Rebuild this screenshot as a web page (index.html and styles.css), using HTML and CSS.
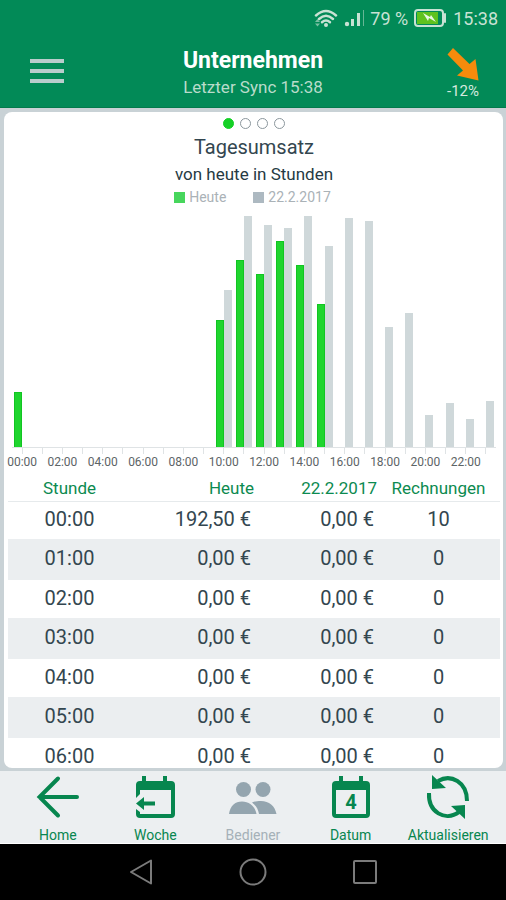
FILE: index.html
```html
<!DOCTYPE html>
<html lang="de">
<head>
<meta charset="utf-8">
<meta name="viewport" content="width=device-width, initial-scale=1">
<title>Unternehmen – Tagesumsatz</title>
<link rel="stylesheet" href="styles.css">
</head>
<body>
<div class="app">
  <div class="top">
    <div class="status">
      <svg class="wifi" viewBox="0 0 24 19" aria-hidden="true">
        <g fill="none" stroke="currentColor" stroke-width="2.500" stroke-linecap="round">
          <path d="M2 6.500Q12 -2.500 22 6.500"/><path d="M5 10Q12 3.500 19 10"/><path d="M8 13.200Q12 9.800 16 13.200"/>
        </g>
        <circle cx="12" cy="16" r="2" fill="currentColor"/>
        <path d="M1 13l2.500-3 2.500 3zM1 14.500h5l-2.500 3z" fill="currentColor" opacity=".6"/>
      </svg>
      <svg class="signal" viewBox="0 0 22 18" aria-hidden="true">
        <g fill="currentColor"><circle cx="3" cy="15" r="2.200"/><rect x="7" y="10" width="3" height="7"/><rect x="13" y="4" width="3" height="13"/><rect x="19" y="1" width="1" height="16" opacity=".5"/></g>
      </svg>
      <span>79 %</span>
      <svg class="battery" viewBox="0 0 33 18" aria-hidden="true">
        <rect x="1" y="1" width="28" height="16" rx="3" fill="none" stroke="#c9e2d4" stroke-width="2"/>
        <rect x="30" y="4" width="2" height="10" rx="1" fill="#c9e2d4"/>
        <rect x="3" y="3" width="21" height="12" fill="#5fc21f"/>
        <path d="M9 4l7 4 1-2 5 7-7-4-1 3z" fill="#e9f7e4"/>
      </svg>
      <span>15:38</span>
    </div>
    <header class="header">
      <button class="menu" type="button" aria-label="Menü"><span></span><span></span><span></span></button>
      <div class="title">
        <h1>Unternehmen</h1>
        <p>Letzter Sync 15:38</p>
      </div>
      <div class="trend">
        <svg viewBox="0 0 34 34" aria-hidden="true"><path d="M7 0L23.500 16 29.500 11 32.500 32.500 11 27.500 17 22.500 1.500 6.500z" fill="#f68b0c"/></svg>
        <span>-12%</span>
      </div>
    </header>
  </div>

  <main class="main">
    <section class="card">
      <div class="dots"><i class="dot active"></i><i class="dot"></i><i class="dot"></i><i class="dot"></i></div>
      <h2>Tagesumsatz</h2>
      <p class="sub">von heute in Stunden</p>
      <div class="legend"><span class="key today">Heute</span><span class="key past">22.2.2017</span></div>
      <div class="chart" id="chart"></div>
      <table>
        <thead><tr><th scope="col">Stunde</th><th scope="col">Heute</th><th scope="col">22.2.2017</th><th scope="col">Rechnungen</th></tr></thead>
        <tbody>
          <tr><td>00:00</td><td>192,50 €</td><td>0,00 €</td><td>10</td></tr>
          <tr><td>01:00</td><td>0,00 €</td><td>0,00 €</td><td>0</td></tr>
          <tr><td>02:00</td><td>0,00 €</td><td>0,00 €</td><td>0</td></tr>
          <tr><td>03:00</td><td>0,00 €</td><td>0,00 €</td><td>0</td></tr>
          <tr><td>04:00</td><td>0,00 €</td><td>0,00 €</td><td>0</td></tr>
          <tr><td>05:00</td><td>0,00 €</td><td>0,00 €</td><td>0</td></tr>
          <tr><td>06:00</td><td>0,00 €</td><td>0,00 €</td><td>0</td></tr>
        </tbody>
      </table>
    </section>
  </main>

  <nav class="tabs">
    <button type="button">
      <svg viewBox="0 0 44 44" aria-hidden="true"><path d="M22 3.500L3.500 22 22 40.500M3.500 22H41" fill="none" stroke="currentColor" stroke-width="4" stroke-linecap="round"/></svg>
      <span>Home</span>
    </button>
    <button type="button">
      <svg viewBox="0 0 44 44" aria-hidden="true">
        <path d="M9 1h4v5h17V1h4v5h4a4 4 0 0 1 4 4v29a4 4 0 0 1-4 4H7a4 4 0 0 1-4-4v-5l4 3v2h31V15H7v4l-4 4V10a4 4 0 0 1 4-4h2z" fill="currentColor"/>
        <path d="M3 28.500l8-6.500v4.500h11v4H11V35z" fill="currentColor"/>
      </svg>
      <span>Woche</span>
    </button>
    <button type="button" disabled>
      <svg class="wide" viewBox="0 0 50 44" aria-hidden="true">
        <g fill="#94a5af"><circle cx="15.500" cy="14.500" r="7.500"/><circle cx="35" cy="14.500" r="7.500"/>
        <path d="M1 39c1-8 6-12.500 13-12.500S27 31 28.500 39z"/><path d="M24 27.500c2.500-1 5-1.500 9-1.500 8 0 14 5 15.500 13H31c-.8-5-3-8.500-7-11.500z"/></g>
      </svg>
      <span>Bediener</span>
    </button>
    <button type="button">
      <svg viewBox="0 0 44 44" aria-hidden="true">
        <path d="M10 1h4v5h16V1h4v5h3a4 4 0 0 1 4 4v29a4 4 0 0 1-4 4H7a4 4 0 0 1-4-4V10a4 4 0 0 1 4-4h3zM7 15v24h30V15z" fill="currentColor" fill-rule="evenodd"/>
        <text x="22" y="34" text-anchor="middle">4</text>
      </svg>
      <span>Datum</span>
    </button>
    <button type="button">
      <svg viewBox="0 0 44 44" aria-hidden="true">
        <g fill="none" stroke="currentColor" stroke-width="4"><path d="M12 6C25-1.500 41 7 41 26"/><path d="M3 18C2 37 19 47 33 37"/></g>
        <path d="M6 0v14l14-1zM39 44V30l-14 1z" fill="currentColor"/>
      </svg>
      <span>Aktualisieren</span>
    </button>
  </nav>

  <div class="system">
    <button type="button" aria-label="Zurück"><svg viewBox="0 0 28 28" aria-hidden="true"><path d="M4 14L24 2.500v23z"/></svg></button>
    <button type="button" aria-label="Startbildschirm"><svg viewBox="0 0 28 28" aria-hidden="true"><circle cx="14" cy="14" r="12.500"/></svg></button>
    <button type="button" aria-label="Übersicht"><svg viewBox="0 0 28 28" aria-hidden="true"><rect x="3" y="3" width="22" height="22" rx="1"/></svg></button>
  </div>
</div>
<script src="chart.js"></script>
</body>
</html>
```
FILE: styles.css
```css
* { box-sizing: border-box; }
body { margin: 0; font-family: Roboto, "Liberation Sans", sans-serif; color: #33464f; }
h1, h2, p { margin: 0; }
button { border: 0; padding: 0; background: none; font: inherit; color: inherit; }

.app { display: flex; flex-direction: column; height: 100vh; background: #c9d2d6; }

.top { background: #028a57; border-bottom: 1px solid #027a4b; color: #fff; }
.status { display: flex; align-items: center; justify-content: flex-end; height: 36px; padding-right: 8px; font-size: 18px; color: #c9e2d4; }
.status svg { flex: none; }
.wifi { width: 24px; height: 19px; margin-right: 6px; }
.signal { width: 22px; height: 18px; margin-right: 4px; }
.battery { width: 33px; height: 18px; margin: 0 6px; }

.header { display: grid; grid-template-columns: 90px 1fr 90px; align-items: start; height: 71px; }
.menu { display: flex; flex-direction: column; gap: 6px; margin: 23px 0 0 30px; width: 34px; }
.menu span { height: 4px; background: #b9cdcc; }
.title { text-align: center; padding-top: 11px; }
.title h1 { font-size: 23px; line-height: 28px; font-weight: 700; }
.title p { font-size: 17px; line-height: 24px; color: #b9dccb; }
.trend { display: flex; flex-direction: column; align-items: center; padding: 12px 0 0 4px; font-size: 15px; line-height: 18px; color: #d5e9df; }
.trend svg { width: 34px; height: 34px; }

.main { flex: 1; min-height: 0; padding: 4px 3px 3px 4px; }
.card { height: 100%; overflow: hidden; background: #fff; border-radius: 8px; padding: 0 3px 0 4px; }
.dots { display: flex; justify-content: center; gap: 6px; padding-top: 6px; }
.dot { width: 11px; height: 11px; border: 1px solid #8b969c; border-radius: 50%; }
.dot.active { background: #15d026; border-color: #15d026; }
.card h2 { text-align: center; font-weight: 400; font-size: 20px; line-height: 28px; padding-top: 4px; }
.sub { text-align: center; font-size: 17px; line-height: 26px; color: #263a43; }
.legend { display: flex; justify-content: center; gap: 27px; padding-right: 3px; font-size: 14px; line-height: 20px; color: #aab2b7; }
.key { display: flex; align-items: center; gap: 4px; }
.key::before { content: ""; width: 11px; height: 11px; }
.today::before { background: #47d65c; }
.past::before { background: #adb9c1; }

.chart { display: grid; grid-template-columns: repeat(24, 1fr); padding: 9px 4px 0; }
.bars { display: flex; justify-content: center; align-items: flex-end; height: 232px; border-bottom: 1px solid #dfe3e5; }
.bar { width: 8px; }
.bar.now { background: #1fd52e; border: solid #11c522; border-width: 1px 1px 0; }
.bar.then { background: #cfd8da; }
.hour { display: flex; flex-direction: column; min-width: 0; }
.mark { align-self: center; width: 1px; height: 6px; background: #dfe3e5; margin-bottom: 1px; }
.tick { display: flex; justify-content: center; font-size: 12px; line-height: 14px; color: #5d6466; white-space: nowrap; }

table { width: 100%; table-layout: fixed; border-collapse: collapse; font-size: 20px; }
th { height: 32px; padding: 7px 0 0; font-size: 17px; font-weight: 400; color: #0c8a50; border-bottom: 1px solid #e6eaec; }
td { height: 38px; padding: 0 0 3px; text-align: center; }
tr:nth-child(even) td { height: 41px; background: #ebeef0; }
th:nth-child(2), th:nth-child(3), td:nth-child(2), td:nth-child(3) { text-align: right; }
td:nth-child(2), td:nth-child(3) { padding-right: 3px; }

.tabs { display: grid; grid-template-columns: repeat(5, 1fr); height: 73px; padding: 0 9px; background: #eceff1; color: #07864f; border-bottom: 1px solid #fff; }
.tabs button { display: flex; flex-direction: column; align-items: center; padding-top: 4px; font-size: 14px; line-height: 16px; }
.tabs button:disabled { color: #a5b1b8; }
.tabs svg { width: 44px; height: 44px; margin-bottom: 8px; }
.tabs .wide { width: 50px; }
.tabs text { font-size: 20px; font-weight: 700; fill: currentColor; }

.system { display: flex; justify-content: center; align-items: center; gap: 84px; height: 56px; background: #000; }
.system svg { display: block; width: 28px; height: 28px; fill: none; stroke: #7b7b7b; stroke-width: 2; stroke-linejoin: round; }
```
FILE: chart.js
```js
// Revenue per hour, as a share of the plot height in percent.
const today = [24, 0, 0, 0, 0, 0, 0, 0, 0, 0, 55, 81, 75, 89, 79, 62];
const past = [0, 0, 0, 0, 0, 0, 0, 0, 0, 0, 68, 100, 96, 95, 100, 87, 99, 98, 52, 58, 14, 19, 12, 20];

const chart = document.getElementById("chart");
for (let h = 0; h < 24; h++) {
  const label = h % 2 === 0 ? String(h).padStart(2, "0") + ":00" : "";
  const bar = (kind, value) =>
    `<div class="bar ${value ? kind : ""}" style="height:${value || 0}%"></div>`;
  chart.insertAdjacentHTML("beforeend",
    `<div class="hour"><div class="bars">${bar("now", today[h])}${bar("then", past[h])}</div>` +
    `<div class="mark"></div><div class="tick">${label}</div></div>`);
}
```
